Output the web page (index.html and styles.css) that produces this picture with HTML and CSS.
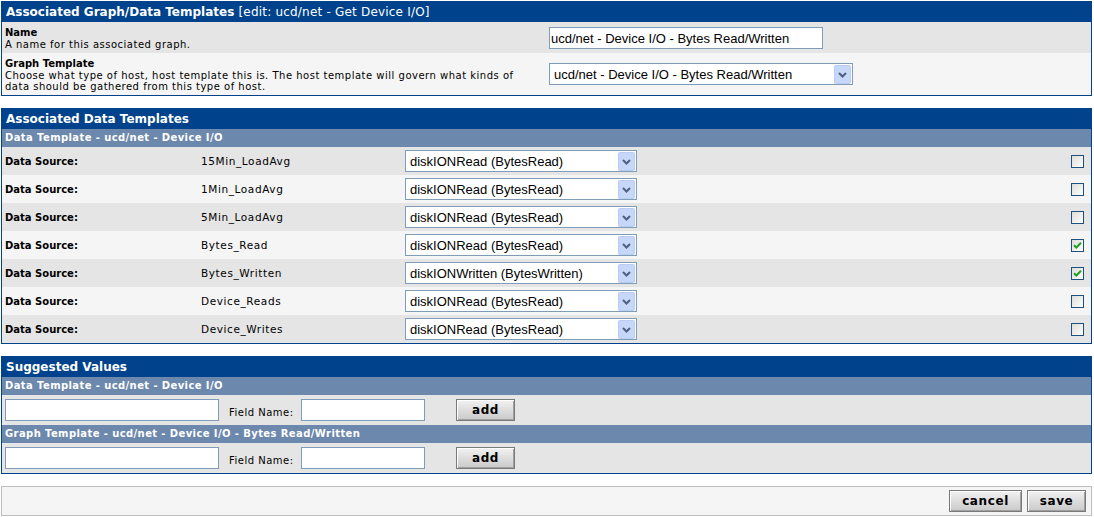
FILE: index.html
```html
<!DOCTYPE html>
<html>
<head>
<meta charset="utf-8">
<link rel="stylesheet" href="styles.css">
</head>
<body>
<div class="page">

  <section class="box">
    <div class="hdr">Associated Graph/Data Templates <span class="thin">[edit: ucd/net - Get Device I/O]</span></div>
    <div class="frow dark name-row">
      <div class="fdesc"><b>Name</b><br>A name for this associated graph.</div>
      <div class="fctl"><input class="txt w274" type="text" value="ucd/net - Device I/O - Bytes Read/Written"></div>
    </div>
    <div class="frow light gt-row">
      <div class="fdesc"><b>Graph Template</b><br>Choose what type of host, host template this is. The host template will govern what kinds of data should be gathered from this type of host.</div>
      <div class="fctl">
        <div class="sel w304"><span class="seltext">ucd/net - Device I/O - Bytes Read/Written</span><svg class="arrow" width="17" height="19" viewBox="0 0 17 19"><rect x="0.5" y="0.5" width="16" height="18" rx="1" fill="#C6D7FA" stroke="#B9CCF5"/><path d="M5 8 L8.5 11.5 L12 8" fill="none" stroke="#4D6185" stroke-width="2"/></svg></div>
      </div>
    </div>
  </section>

  <section class="box">
    <div class="hdr">Associated Data Templates</div>
    <div class="sub">Data Template - ucd/net - Device I/O</div>
    <div class="drow dark"><b>Data Source:</b><span class="dsname">15Min_LoadAvg</span><div class="sel w232"><span class="seltext">diskIONRead (BytesRead)</span><svg class="arrow" width="17" height="19" viewBox="0 0 17 19"><rect x="0.5" y="0.5" width="16" height="18" rx="1" fill="#C6D7FA" stroke="#B9CCF5"/><path d="M5 8 L8.5 11.5 L12 8" fill="none" stroke="#4D6185" stroke-width="2"/></svg></div><span class="cb"><svg width="13" height="13" viewBox="0 0 13 13"><defs><linearGradient id="g" x1="0" y1="0" x2="1" y2="1"><stop offset="0" stop-color="#DCDCD7"/><stop offset="1" stop-color="#FFFFFF"/></linearGradient></defs><rect x="0.5" y="0.5" width="12" height="12" fill="url(#g)" stroke="#1C5180"/></svg></span></div>
    <div class="drow light"><b>Data Source:</b><span class="dsname">1Min_LoadAvg</span><div class="sel w232"><span class="seltext">diskIONRead (BytesRead)</span><svg class="arrow" width="17" height="19" viewBox="0 0 17 19"><rect x="0.5" y="0.5" width="16" height="18" rx="1" fill="#C6D7FA" stroke="#B9CCF5"/><path d="M5 8 L8.5 11.5 L12 8" fill="none" stroke="#4D6185" stroke-width="2"/></svg></div><span class="cb"><svg width="13" height="13" viewBox="0 0 13 13"><rect x="0.5" y="0.5" width="12" height="12" fill="url(#g)" stroke="#1C5180"/></svg></span></div>
    <div class="drow dark"><b>Data Source:</b><span class="dsname">5Min_LoadAvg</span><div class="sel w232"><span class="seltext">diskIONRead (BytesRead)</span><svg class="arrow" width="17" height="19" viewBox="0 0 17 19"><rect x="0.5" y="0.5" width="16" height="18" rx="1" fill="#C6D7FA" stroke="#B9CCF5"/><path d="M5 8 L8.5 11.5 L12 8" fill="none" stroke="#4D6185" stroke-width="2"/></svg></div><span class="cb"><svg width="13" height="13" viewBox="0 0 13 13"><rect x="0.5" y="0.5" width="12" height="12" fill="url(#g)" stroke="#1C5180"/></svg></span></div>
    <div class="drow light"><b>Data Source:</b><span class="dsname">Bytes_Read</span><div class="sel w232"><span class="seltext">diskIONRead (BytesRead)</span><svg class="arrow" width="17" height="19" viewBox="0 0 17 19"><rect x="0.5" y="0.5" width="16" height="18" rx="1" fill="#C6D7FA" stroke="#B9CCF5"/><path d="M5 8 L8.5 11.5 L12 8" fill="none" stroke="#4D6185" stroke-width="2"/></svg></div><span class="cb"><svg width="13" height="13" viewBox="0 0 13 13"><rect x="0.5" y="0.5" width="12" height="12" fill="url(#g)" stroke="#1C5180"/><path d="M3 6.2 L5.3 8.5 L10 3.8" fill="none" stroke="#21A121" stroke-width="2"/></svg></span></div>
    <div class="drow dark"><b>Data Source:</b><span class="dsname">Bytes_Written</span><div class="sel w232"><span class="seltext">diskIONWritten (BytesWritten)</span><svg class="arrow" width="17" height="19" viewBox="0 0 17 19"><rect x="0.5" y="0.5" width="16" height="18" rx="1" fill="#C6D7FA" stroke="#B9CCF5"/><path d="M5 8 L8.5 11.5 L12 8" fill="none" stroke="#4D6185" stroke-width="2"/></svg></div><span class="cb"><svg width="13" height="13" viewBox="0 0 13 13"><rect x="0.5" y="0.5" width="12" height="12" fill="url(#g)" stroke="#1C5180"/><path d="M3 6.2 L5.3 8.5 L10 3.8" fill="none" stroke="#21A121" stroke-width="2"/></svg></span></div>
    <div class="drow light"><b>Data Source:</b><span class="dsname">Device_Reads</span><div class="sel w232"><span class="seltext">diskIONRead (BytesRead)</span><svg class="arrow" width="17" height="19" viewBox="0 0 17 19"><rect x="0.5" y="0.5" width="16" height="18" rx="1" fill="#C6D7FA" stroke="#B9CCF5"/><path d="M5 8 L8.5 11.5 L12 8" fill="none" stroke="#4D6185" stroke-width="2"/></svg></div><span class="cb"><svg width="13" height="13" viewBox="0 0 13 13"><rect x="0.5" y="0.5" width="12" height="12" fill="url(#g)" stroke="#1C5180"/></svg></span></div>
    <div class="drow dark"><b>Data Source:</b><span class="dsname">Device_Writes</span><div class="sel w232"><span class="seltext">diskIONRead (BytesRead)</span><svg class="arrow" width="17" height="19" viewBox="0 0 17 19"><rect x="0.5" y="0.5" width="16" height="18" rx="1" fill="#C6D7FA" stroke="#B9CCF5"/><path d="M5 8 L8.5 11.5 L12 8" fill="none" stroke="#4D6185" stroke-width="2"/></svg></div><span class="cb"><svg width="13" height="13" viewBox="0 0 13 13"><rect x="0.5" y="0.5" width="12" height="12" fill="url(#g)" stroke="#1C5180"/></svg></span></div>
  </section>

  <section class="box">
    <div class="hdr">Suggested Values</div>
    <div class="sub">Data Template - ucd/net - Device I/O</div>
    <div class="srow dark">
      <input class="txt w214" type="text" value="">
      <span class="flabel">Field Name:</span>
      <input class="txt w124" type="text" value="">
      <button class="btn add">add</button>
    </div>
    <div class="sub">Graph Template - ucd/net - Device I/O - Bytes Read/Written</div>
    <div class="srow dark">
      <input class="txt w214" type="text" value="">
      <span class="flabel">Field Name:</span>
      <input class="txt w124" type="text" value="">
      <button class="btn add">add</button>
    </div>
  </section>

  <div class="savebar">
    <button class="btn cancel">cancel</button>
    <button class="btn save">save</button>
  </div>

</div>
</body>
</html>
```

FILE: styles.css
```css
html, body {
  margin: 0;
  padding: 0;
  background: #FFFFFF;
}

.page {
  padding: 1px 2px 0 1px;
  font-family: "DejaVu Sans", Verdana, sans-serif;
  font-size: 10px;
  color: #000000;
}

.box {
  border: 1px solid #00438C;
  margin-bottom: 12px;
  background: #F5F5F5;
}

.hdr {
  background: #00438C;
  color: #FFFFFF;
  font-weight: bold;
  font-size: 12px;
  height: 20px;
  line-height: 20px;
  padding-left: 4px;
  white-space: nowrap;
}

.hdr .thin {
  font-weight: normal;
  letter-spacing: 0.2px;
}

.sub {
  background: #6D88AD;
  color: #FFFFFF;
  font-weight: bold;
  font-size: 10px;
  letter-spacing: 0.4px;
  height: 18px;
  line-height: 18px;
  padding-left: 3px;
  white-space: nowrap;
}

.dark { background: #E5E5E5; }
.light { background: #F5F5F5; }

.frow {
  display: grid;
  grid-template-columns: 544px 1fr;
}

.name-row { height: 31px; }
.gt-row { height: 42px; }

.fdesc {
  padding: 5px 14px 0 3px;
  line-height: 11.5px;
  letter-spacing: 0.5px;
}

.fdesc b {
  letter-spacing: 0;
}

.name-row .fctl { padding: 5px 3px 0 3px; }
.gt-row .fctl { padding: 10px 3px 0 3px; }

.txt {
  box-sizing: border-box;
  height: 22px;
  border: 1px solid #7F9DB9;
  background: #FFFFFF;
  font-family: "Liberation Sans", Arial, sans-serif;
  font-size: 13px;
  color: #000000;
  padding: 0 1px;
  margin: 0;
  outline: none;
}

.w274 { width: 274px; }
.w214 { width: 214px; }
.w124 { width: 124px; }

.sel {
  box-sizing: border-box;
  height: 22px;
  border: 1px solid #7F9DB9;
  background: #FFFFFF;
  display: flex;
  align-items: center;
  justify-content: space-between;
  padding: 0 1px 0 4px;
  font-family: "Liberation Sans", Arial, sans-serif;
  font-size: 13px;
  white-space: nowrap;
}

.w232 { width: 232px; }
.w304 { width: 304px; }

.arrow { display: block; }

.drow {
  display: grid;
  grid-template-columns: 196px 204px 1fr auto;
  align-items: center;
  height: 28px;
  padding: 0 7px 0 3px;
}

.dsname {
  font-size: 10.5px;
  letter-spacing: 0.6px;
}

.cb {
  display: flex;
  align-items: center;
}

.cb svg { display: block; }

.srow {
  display: flex;
  align-items: flex-end;
  height: 30px;
  box-sizing: border-box;
  padding: 4px 3px 4px 3px;
}

.flabel {
  width: 72px;
  margin-left: 10px;
  padding-bottom: 2px;
  line-height: 12px;
  letter-spacing: 0.5px;
  white-space: nowrap;
}

.btn {
  box-sizing: border-box;
  height: 22px;
  margin: 0;
  padding: 0;
  font-family: "DejaVu Sans", Verdana, sans-serif;
  font-weight: bold;
  font-size: 12px;
  color: #000000;
  background: linear-gradient(#F2F2F2, #C9C9C9);
  border: 1px solid #7A7A7A;
  box-shadow: inset 1px 1px 0 #FFFFFF, inset -1px -1px 0 #A0A0A0;
  letter-spacing: 0.6px;
}

.add {
  width: 59px;
  margin-left: 31px;
}

.savebar {
  box-sizing: border-box;
  height: 30px;
  border: 1px solid #BEBEBE;
  background: #F5F5F5;
  display: flex;
  justify-content: flex-end;
  align-items: center;
  gap: 5px;
  padding-right: 5px;
  margin-top: 12px;
}

.cancel { width: 73px; }
.save { width: 59px; }
```
